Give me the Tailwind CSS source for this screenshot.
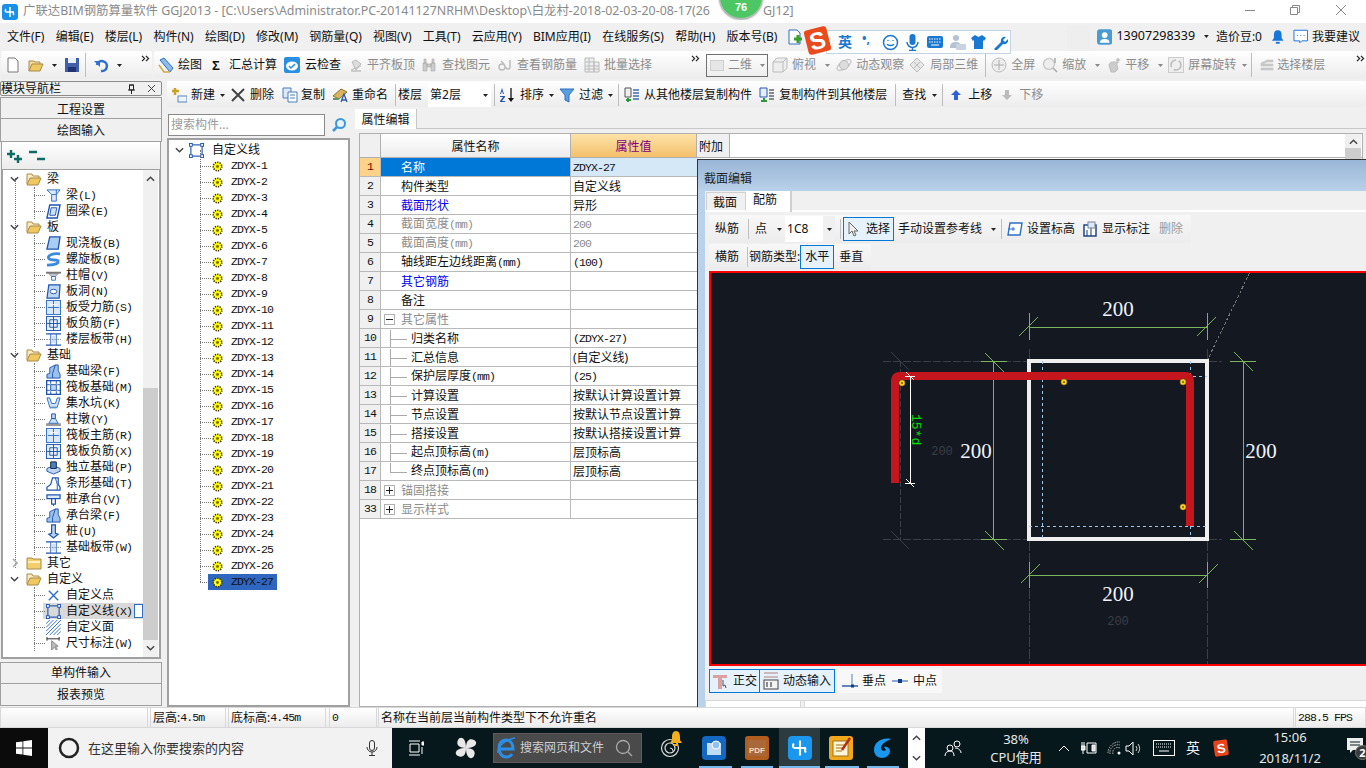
<!DOCTYPE html>
<html lang="zh-CN">
<head>
<meta charset="utf-8">
<title>广联达BIM钢筋算量软件</title>
<script src="https://cdn.jsdelivr.net/npm/@tailwindcss/browser@4"></script>
</head>
<body class="m-0 overflow-hidden bg-[#f0f0f0] [&_i]:not-italic [&_i]:text-[11.5px] [&_i]:tracking-[-0.9px] [&_i]:font-['Liberation_Mono',monospace]">
<svg class="absolute w-0 h-0" aria-hidden="true">
  <symbol id="gear" viewBox="0 0 12 12"><circle cx="6" cy="6" r="4.6" fill="#ffff00" stroke="#3a3000" stroke-width="1.8" stroke-dasharray="1.4 1.2"/><circle cx="6" cy="6" r="3.4" fill="#ffff00"/><circle cx="6" cy="6" r="1.6" fill="#7a6a10"/></symbol>
  <symbol id="fo" viewBox="0 0 16 14"><path d="M1 12V2h5l1 2h6v2" fill="#fbeec0" stroke="#a88a4a"/><path d="M1 13l3-7h11l-3 7z" fill="#f0c860" stroke="#a88a4a"/></symbol>
  <symbol id="fc" viewBox="0 0 16 14"><path d="M1 13V2h5l1 1h8v10z" fill="#f3cf6c" stroke="#a88a4a"/><path d="M2 5h12v2H2z" fill="#fdf0c0"/></symbol>
  <symbol id="chd" viewBox="0 0 10 6"><path d="M1 1l4 4 4-4" fill="none" stroke="#444" stroke-width="1.6"/></symbol>
  <symbol id="chr" viewBox="0 0 6 10"><path d="M1 1l4 4-4 4" fill="none" stroke="#aaa" stroke-width="1.6"/></symbol>
  <symbol id="beam" viewBox="0 0 16 16"><path d="M1 2h14l-4 5v7H6V7z" fill="#dcebfa" stroke="#2d6fc4"/><path d="M11 2v5M6 7h5" stroke="#2d6fc4"/></symbol>
  <symbol id="ring" viewBox="0 0 16 16"><path d="M4 1h11l-3 14H1z" fill="#fff" stroke="#1f54b0" stroke-width="1.5"/><path d="M5.500 4h6l-1.500 8h-6z" fill="#cfe2f8" stroke="#1f54b0"/></symbol>
  <symbol id="slab" viewBox="0 0 16 16"><path d="M4 1h11l-2 13H1z" fill="#a9cdf2" stroke="#1f54b0" stroke-width="1.4"/></symbol>
  <symbol id="spiral" viewBox="0 0 16 16"><path d="M15 2C7 1 1 4 3 7s10 0 10 3-7 4-12 4" fill="none" stroke="#3a8ae0" stroke-width="3"/></symbol>
  <symbol id="cap" viewBox="0 0 16 16"><path d="M0 4h16v2H0z" fill="#777"/><path d="M3 6h10l-3 3H6z" fill="#ccc" stroke="#666" stroke-width=".6"/><path d="M6 9h4v4H6z" fill="#fff" stroke="#2d6fc4"/></symbol>
  <symbol id="hole" viewBox="0 0 16 16"><path d="M3 1h12l-1 14H1z" fill="#bcd6f4" stroke="#1f54b0" stroke-width="1.3"/><ellipse cx="8" cy="8" rx="3.500" ry="2.400" fill="#fff" stroke="#1f54b0"/></symbol>
  <symbol id="gridc" viewBox="0 0 16 16"><rect x=".5" y=".5" width="15" height="15" fill="#d8e8fa" stroke="#2d6fc4"/><path d="M8 1v14M2 8h12" stroke="#2d6fc4"/><path d="M4 5h8" stroke="#fff"/></symbol>
  <symbol id="grid" viewBox="0 0 16 16"><rect x=".5" y=".5" width="15" height="15" fill="#e6f0fb" stroke="#1f54b0"/><path d="M8 1v14M1 8h14M4 4h8v8H4z" fill="none" stroke="#1f54b0"/></symbol>
  <symbol id="band" viewBox="0 0 16 16"><path d="M0 2h16M0 14h16" stroke="#1f54b0" stroke-width="1.5"/><path d="M5 2v12M11 2v12" stroke="#2d6fc4"/><path d="M6 4h4v8H6z" fill="#cfe2f8"/><path d="M0 8h16" stroke="#999" stroke-dasharray="2 1"/></symbol>
  <symbol id="fb" viewBox="0 0 16 16"><path d="M1 15V11l3-1V4l6-3h3v6l2 4v4z" fill="#9cc2ec" stroke="#1f54b0"/><path d="M10 1l-3 9v5" fill="none" stroke="#1f54b0"/></symbol>
  <symbol id="raft" viewBox="0 0 16 16"><rect x=".7" y=".7" width="14.600" height="14.600" fill="#fff" stroke="#1f54b0" stroke-width="1.4"/><rect x="5" y="5" width="6" height="6" fill="#bcd6f4" stroke="#1f54b0"/><path d="M1 5h3M12 5h3M1 11h3M12 11h3M5 1v3M11 1v3M5 12v3M11 12v3" stroke="#1f54b0"/></symbol>
  <symbol id="pit" viewBox="0 0 16 16"><path d="M1 2h3l2 6h4l2-6h3l-3 10H4z" fill="#cfe2f8" stroke="#2d6fc4"/><path d="M4 13h8" stroke="#2d6fc4" stroke-dasharray="1 1"/></symbol>
  <symbol id="pier" viewBox="0 0 16 16"><path d="M0 12h16v3H0z" fill="#999"/><path d="M3 12l3-5h4l3 5z" fill="#cfe2f8" stroke="#2d6fc4"/><path d="M6 2h4v5H6z" fill="#bcd6f4" stroke="#1f54b0"/></symbol>
  <symbol id="iso" viewBox="0 0 16 16"><path d="M1 9l7-3 7 3v3l-7 3-7-3z" fill="#bcd6f4" stroke="#1f54b0"/><path d="M5 2h6v7H5z" fill="#4a7fc4" stroke="#123"/></symbol>
  <symbol id="strip" viewBox="0 0 16 16"><path d="M1 15v-3l4-3 2-7h6v7l2 3v3z" fill="#fff" stroke="#1f54b0" stroke-width="1.3"/><path d="M10 2l2 7v6" fill="none" stroke="#1f54b0"/></symbol>
  <symbol id="capb" viewBox="0 0 16 16"><path d="M1 3h14v4H1z" fill="#dcebfa" stroke="#1f54b0" stroke-width="1.300"/><path d="M6 7h4v6H6z" fill="#fff" stroke="#1f54b0" stroke-width="1.300"/><path d="M8 13v2" stroke="#1f54b0"/></symbol>
  <symbol id="pile" viewBox="0 0 16 16"><path d="M6 1h4v9l3 1-5 4-5-4 3-1z" fill="#bcd6f4" stroke="#1f54b0" stroke-width="1.300"/></symbol>
  <symbol id="xpt" viewBox="0 0 16 16"><path d="M3 3l10 10M13 3L3 13" stroke="#2d6fc4" stroke-width="1.5"/></symbol>
  <symbol id="rect" viewBox="0 0 16 16"><rect x="2" y="2" width="12" height="12" fill="none" stroke="#1f54b0" stroke-width="1.200"/><g fill="#fff" stroke="#1f54b0"><rect x=".5" y=".5" width="3" height="3"/><rect x="12.500" y=".5" width="3" height="3"/><rect x=".5" y="12.500" width="3" height="3"/><rect x="12.500" y="12.500" width="3" height="3"/></g></symbol>
  <symbol id="hatch" viewBox="0 0 16 16"><path d="M0 4l4-4M0 8l8-8M0 12L12 0M0 16L16 0M4 16L16 4M8 16l8-8M12 16l4-4" stroke="#2d6fc4"/></symbol>
  <symbol id="dim" viewBox="0 0 16 16"><path d="M1 1v4M14 1v4M1 3h13" stroke="#222"/><path d="M6 5v10l3-3 2 3 1-1-2-3h3z" fill="#bbb" stroke="#888"/></symbol>
  <symbol id="tri" viewBox="0 0 5 3"><path d="M0 0h5L2.500 3z" fill="#222"/></symbol>
  <symbol id="trig" viewBox="0 0 5 3"><path d="M0 0h5L2.500 3z" fill="#888"/></symbol>
  <symbol id="more" viewBox="0 0 10 8"><path d="M1 1l3 3-3 3M5.500 1l3 3-3 3" fill="none" stroke="#222" stroke-width="1.400"/></symbol>
  <symbol id="gbin" viewBox="0 0 16 16"><path d="M3 13l10-4M4 5l4 8 5-6-5-4z" fill="#ddd" stroke="#bbb"/><path d="M3 14h10" stroke="#ccc" stroke-width="2"/></symbol>
</svg>

<div class="relative flex flex-col w-[1366px] h-[768px] overflow-hidden text-[12px] leading-none text-[#111] font-['Noto_Sans','Noto_Sans_CJK_SC',sans-serif] whitespace-nowrap">

  <!-- title bar -->
  <div class="flex items-center h-[23px] bg-white shrink-0 relative">
    <div class="ml-[2px] w-4 h-4 rounded-[3px] bg-[#1a8fe8] flex items-center justify-center">
      <svg class="w-3 h-3" viewBox="0 0 12 12"><path d="M6 1v10M2 6h8M2 6a2 2 0 0 1 0-3M10 6a2 2 0 0 0 0 3" fill="none" stroke="#fff" stroke-width="1.500"/></svg>
    </div>
    <span class="ml-[5px] w-[696px] text-[#8a8a8a] text-[12.4px]">广联达BIM钢筋算量软件 GGJ2013 - [C:\Users\Administrator.PC-20141127NRHM\Desktop\白龙村-2018-02-03-20-08-17(26</span>
    <span class="ml-[44px] text-[#8a8a8a] text-[12.4px]">GJ12]</span>
    <svg class="absolute left-[1245px] top-[10px] w-[10px] h-px" viewBox="0 0 10 1"><path d="M0 .5h10" stroke="#888"/></svg>
    <svg class="absolute left-[1290px] top-[5px] w-[10px] h-[10px]" viewBox="0 0 10 10"><path d="M.5 2.500h7v7h-7zM2.500 2.500v-2h7v7h-2" fill="none" stroke="#888"/></svg>
    <svg class="absolute left-[1336px] top-[5px] w-[10px] h-[10px]" viewBox="0 0 10 10"><path d="M0 0l10 10M10 0L0 10" stroke="#888"/></svg>
  </div>

  <!-- menu bar -->
  <div class="flex items-center h-[27px] pl-[7px] gap-[11.2px] bg-[#f0f0f0] shrink-0">
    <span>文件(F)</span><span>编辑(E)</span><span>楼层(L)</span><span>构件(N)</span><span>绘图(D)</span><span>修改(M)</span><span>钢筋量(Q)</span><span>视图(V)</span><span>工具(T)</span><span>云应用(Y)</span><span>BIM应用(I)</span><span>在线服务(S)</span><span>帮助(H)</span><span>版本号(B)</span>
    <svg class="-ml-[2px] w-4 h-4" viewBox="0 0 16 16"><path d="M2 1h8l3 3v11H2z" fill="#fff" stroke="#2d6fc4"/><path d="M7 10h8M11 6v8" stroke="#3aa02c" stroke-width="3"/></svg>
    <div class="ml-auto mr-[6px] flex items-center">
      <div class="w-[23px] h-[24px] bg-[#eeeeee] mr-[3px]"></div>
      <div class="flex items-center w-[267px]">
        <svg class="ml-[4px] w-4 h-4" viewBox="0 0 16 16"><rect width="16" height="16" rx="3" fill="#4a9bd4"/><circle cx="8" cy="6" r="3" fill="#fff"/><path d="M3 14c0-3 2-4 5-4s5 1 5 4z" fill="#fff"/></svg>
        <span class="ml-[4px] text-[12.5px]">13907298339</span>
        <svg class="ml-[9px] w-[5px] h-[3px]"><use href="#tri"/></svg>
        <span class="ml-[7px]">造价豆:0</span>
        <svg class="ml-[10px] w-3 h-4" viewBox="0 0 12 16"><path d="M6 1c3 0 4 2 4 5v3l2 3H0l2-3V6c0-3 1-5 4-5z" fill="#1777d8"/><path d="M4 14h4" stroke="#1777d8" stroke-width="2"/></svg>
        <svg class="ml-[9px] w-4 h-4" viewBox="0 0 16 16"><path d="M1 1h14v11H9l-2 2v-2H1z" fill="#fff" stroke="#1777d8"/><path d="M4 6.500h1M7.500 6.500h1M11 6.500h1" stroke="#1777d8"/></svg>
        <span class="ml-[4px]">我要建议</span>
      </div>
    </div>
  </div>

  <!-- main toolbar -->
  <div class="flex items-center h-[30px] shrink-0 pl-px gap-[2px]">
    <div class="flex items-center h-[28px] w-[151px] pl-[4px] rounded-[2px] bg-gradient-to-b from-white to-[#ececec] [&>*]:shrink-0">
      <svg class="w-4 h-4" viewBox="0 0 16 16"><path d="M3 1h7l3 3v11H3z" fill="#fff" stroke="#777"/></svg>
      <svg class="ml-[7px] w-4 h-4" viewBox="0 0 16 16"><path d="M1 14V4h5l1 1h5v2" fill="#f6dc9a" stroke="#a88a4a"/><path d="M1 14l3-7h11l-3 7z" fill="#f0c860" stroke="#a88a4a"/></svg>
      <svg class="ml-[8px] w-[5px] h-[3px]"><use href="#tri"/></svg>
      <svg class="ml-[7px] w-4 h-4" viewBox="0 0 16 16"><path d="M1 1h14v14H1z" fill="#3f5fa8"/><path d="M4 1h8v5H4z" fill="#e8eef8"/><path d="M4 10h8v5H4z" fill="#1e3470"/></svg>
      <span class="ml-[5px] w-px h-[24px] bg-[#bdbdbd]"></span>
      <svg class="ml-[7px] w-4 h-4" viewBox="0 0 16 16"><path d="M4 8a5 5 0 1 1 4 6" fill="none" stroke="#2f6fd0" stroke-width="2.500"/><path d="M1 4h6v6z" fill="#2f6fd0"/></svg>
      <svg class="ml-[8px] w-[5px] h-[3px]"><use href="#tri"/></svg>
      <svg class="ml-[19px] w-[9px] h-[7px] self-start mt-[4px]"><use href="#more"/></svg>
    </div>
    <div class="flex items-center h-[28px] flex-1 pl-[4px] rounded-[2px] bg-gradient-to-b from-white to-[#ececec] [&>*]:shrink-0">
      <svg class="w-4 h-4" viewBox="0 0 16 16"><path d="M2 3l4-2 9 10-3 4z" fill="#8fbbe8" stroke="#2d6fc4"/><path d="M1 8l5 7h6" fill="none" stroke="#d4a83c" stroke-width="1.500"/></svg>
      <span class="ml-[4px]">绘图</span>
      <span class="ml-[9px] w-[10px] font-bold text-[13px] text-center font-['Liberation_Sans',sans-serif]">Σ</span>
      <span class="ml-[8px]">汇总计算</span>
      <svg class="ml-[7px] w-4 h-4" viewBox="0 0 16 16"><rect width="16" height="16" rx="2" fill="#2a8fe0"/><ellipse cx="8" cy="9" rx="6" ry="4.500" fill="#fff"/><path d="M5 9l2 2 4-4" fill="none" stroke="#2a8fe0" stroke-width="1.500"/></svg>
      <span class="ml-[5px]">云检查</span>
      <svg class="ml-[7px] w-4 h-4"><use href="#gbin"/></svg>
      <span class="ml-[3px] text-[#8c8c8c]">平齐板顶</span>
      <svg class="ml-[6px] w-4 h-4" viewBox="0 0 16 16"><path d="M2 6h4v8H2zM10 6h4v8h-4zM3 2h2v4H3zM11 2h2v4h-2zM6 7h4v3H6z" fill="#ccc" stroke="#aaa" stroke-width=".6"/></svg>
      <span class="ml-[5px] text-[#8c8c8c]">查找图元</span>
      <svg class="ml-[8px] w-4 h-4" viewBox="0 0 16 16"><circle cx="4" cy="10" r="3" fill="none" stroke="#bbb" stroke-width="1.500"/><path d="M12 3v7a2 2 0 0 1-4 0M3 4l3 3" fill="none" stroke="#bbb" stroke-width="1.500"/></svg>
      <span class="ml-[3px] text-[#8c8c8c]">查看钢筋量</span>
      <svg class="ml-[7px] w-4 h-4" viewBox="0 0 16 16"><path d="M1 1h9v14H1zM10 5h5v10h-5zM1 5h9M1 9h14M1 12h14M5 1v14" fill="#eee" stroke="#bbb"/></svg>
      <span class="ml-[4px] text-[#8c8c8c]">批量选择</span>
      <svg class="ml-[39px] w-[9px] h-[7px] self-start mt-[4px]"><use href="#more"/></svg>
      <div class="ml-[6px] w-[62px] h-[23px] border border-[#707070] flex items-center pl-[2px]">
        <span class="w-[14px] h-[11px] bg-[#e6e6e6] border border-[#cfcfcf] ml-[1px]"></span>
        <span class="ml-[4px] text-[#8c8c8c]">二维</span>
        <svg class="ml-[8px] w-[5px] h-[3px]"><use href="#trig"/></svg>
      </div>
      <svg class="ml-[4px] w-4 h-4" viewBox="0 0 16 16"><path d="M1 5l4-4h10v10l-4 4H1zM1 5h10v10M11 5l4-4" fill="#eee" stroke="#bbb"/></svg>
      <span class="ml-[4px] text-[#8c8c8c]">俯视</span>
      <svg class="ml-[9px] w-[5px] h-[3px]"><use href="#trig"/></svg>
      <svg class="ml-[6px] w-4 h-4" viewBox="0 0 16 16"><ellipse cx="8" cy="8" rx="8" ry="3.500" transform="rotate(-35 8 8)" fill="none" stroke="#ccc" stroke-width="1.500"/><circle cx="8" cy="8" r="4.500" fill="#ddd" stroke="#bbb"/></svg>
      <span class="ml-[4px] text-[#8c8c8c]">动态观察</span>
      <svg class="ml-[5px] w-4 h-4" viewBox="0 0 16 16"><path d="M8 1l7 7-7 7-7-7zM4.500 4.500l7 7M11.500 4.500l-7 7" fill="#e8e8e8" stroke="#bbb"/></svg>
      <span class="ml-[5px] text-[#8c8c8c]">局部三维</span>
      <span class="ml-[7px] w-px h-[24px] bg-[#bdbdbd]"></span>
      <svg class="ml-[5px] w-4 h-4" viewBox="0 0 16 16"><circle cx="8" cy="8" r="7" fill="#eee" stroke="#bbb"/><path d="M8 3v10M3 8h10" stroke="#aaa"/></svg>
      <span class="ml-[4px] text-[#8c8c8c]">全屏</span>
      <svg class="ml-[7px] w-4 h-4" viewBox="0 0 16 16"><circle cx="7" cy="7" r="5.500" fill="#eee" stroke="#ccc" stroke-width="1.500"/><path d="M11 11l4 4M13 1v5" stroke="#aaa" stroke-width="1.500"/></svg>
      <span class="ml-[4px] text-[#8c8c8c]">缩放</span>
      <svg class="ml-[9px] w-[5px] h-[3px]"><use href="#trig"/></svg>
      <svg class="ml-[6px] w-4 h-4" viewBox="0 0 16 16"><path d="M3 8a4 4 0 0 1 4-3h4v4l1 3-3 3H5z" fill="#ccc" stroke="#bbb"/><path d="M12 1v5M10 3h4" stroke="#aaa"/></svg>
      <span class="ml-[3px] text-[#8c8c8c]">平移</span>
      <svg class="ml-[9px] w-[5px] h-[3px]"><use href="#trig"/></svg>
      <svg class="ml-[5px] w-4 h-4" viewBox="0 0 16 16"><rect x=".5" y=".5" width="15" height="15" fill="#eee" stroke="#ccc"/><circle cx="8" cy="8" r="5" fill="none" stroke="#bbb" stroke-width="1.500" stroke-dasharray="10 3"/></svg>
      <span class="ml-[4px] text-[#8c8c8c]">屏幕旋转</span>
      <svg class="ml-[6px] w-[5px] h-[3px]"><use href="#trig"/></svg>
      <span class="ml-[4px] w-px h-[24px] bg-[#bdbdbd]"></span>
      <svg class="ml-[7px] w-4 h-4" viewBox="0 0 16 16"><path d="M2 6l6-3h6v2H8L4 7h10v2H2zM2 11h12v2H2z" fill="#ccc" stroke="#bbb" stroke-width=".5"/></svg>
      <span class="ml-[2px] text-[#8c8c8c]">选择楼层</span>
      <svg class="ml-[31px] w-[9px] h-[7px] self-start mt-[4px]"><use href="#more"/></svg>
    </div>
  </div>

  <!-- body -->
  <div class="flex flex-1 min-h-0 bg-[#f0f0f0]">
    <!-- left nav -->
    <div class="flex flex-col w-[162px] h-full pt-px shrink-0 text-center">
      <div class="flex items-center h-[15px] border border-[#8c8c8c] bg-[#f0f0f0] rounded-[2px] text-left">
        <span>模块导航栏</span>
        <svg class="ml-auto w-[9px] h-[10px]" viewBox="0 0 9 10"><path d="M2.500 1v5h4V1zM1 6h7M4.500 6v4M2 1h5" fill="none" stroke="#222"/></svg>
        <svg class="ml-[11px] mr-[5px] w-[9px] h-[9px]" viewBox="0 0 9 9"><path d="M1 1l7 7M8 1L1 8" stroke="#444"/></svg>
      </div>
      <div class="mt-px h-[22px] leading-[23px] border border-[#a0a0a0] bg-[#f0f0f0]">工程设置</div>
      <div class="h-[23px] leading-[24px] border border-t-0 border-[#a0a0a0] bg-[#f0f0f0]">绘图输入</div>
      <div class="flex items-center h-[27px] mx-px pl-[4px] bg-gradient-to-b from-white to-[#ececec] border-x border-[#a0a0a0]">
        <svg class="w-[17px] h-[16px]" viewBox="0 0 17 16"><path d="M5 2v8M1 6h8M12 7v8M8 11h8" stroke="#0d6c66" stroke-width="2.400"/></svg>
        <svg class="ml-[6px] w-[17px] h-[16px]" viewBox="0 0 17 16"><path d="M0 4h8M8 11h8" stroke="#0d6c66" stroke-width="2.400"/></svg>
      </div>
      <div class="relative flex h-[490px] mx-px bg-white border-2 border-t border-[#a0a0a0] text-left">
        <span class="absolute left-[12px] top-[8px] h-[390px] border-l border-dotted border-[#777]"></span>
        <span class="absolute left-[31px] top-[17px] h-[32px] border-l border-dotted border-[#777]"></span>
        <span class="absolute left-[31px] top-[65px] h-[112px] border-l border-dotted border-[#777]"></span>
        <span class="absolute left-[31px] top-[193px] h-[192px] border-l border-dotted border-[#777]"></span>
        <span class="absolute left-[31px] top-[417px] h-[64px] border-l border-dotted border-[#777]"></span>
        <div class="relative flex-1 min-w-0 pt-px [&>div]:h-4 [&>div]:flex [&>div]:items-center [&_.c]:ml-[31px] [&_.c]:w-[11px] [&_.c]:border-t [&_.c]:border-dotted [&_.c]:border-[#777] [&_svg]:shrink-0">
          <div><svg class="ml-[7px] w-[9px] h-[6px]"><use href="#chd"/></svg><span class="ml-[7px] w-[16px]"><svg class="w-4 h-[14px]"><use href="#fo"/></svg></span><span class="ml-[5px]">梁</span></div>
          <div><span class="c"></span><svg class="ml-px w-[15px] h-[15px]"><use href="#beam"/></svg><span class="ml-[5px]">梁<i>(L)</i></span></div>
          <div><span class="c"></span><svg class="ml-px w-[15px] h-[15px]"><use href="#ring"/></svg><span class="ml-[5px]">圈梁<i>(E)</i></span></div>
          <div><svg class="ml-[7px] w-[9px] h-[6px]"><use href="#chd"/></svg><span class="ml-[7px] w-[16px]"><svg class="w-4 h-[14px]"><use href="#fo"/></svg></span><span class="ml-[5px]">板</span></div>
          <div><span class="c"></span><svg class="ml-px w-[15px] h-[15px]"><use href="#slab"/></svg><span class="ml-[5px]">现浇板<i>(B)</i></span></div>
          <div><span class="c"></span><svg class="ml-px w-[15px] h-[15px]"><use href="#spiral"/></svg><span class="ml-[5px]">螺旋板<i>(B)</i></span></div>
          <div><span class="c"></span><svg class="ml-px w-[15px] h-[15px]"><use href="#cap"/></svg><span class="ml-[5px]">柱帽<i>(V)</i></span></div>
          <div><span class="c"></span><svg class="ml-px w-[15px] h-[15px]"><use href="#hole"/></svg><span class="ml-[5px]">板洞<i>(N)</i></span></div>
          <div><span class="c"></span><svg class="ml-px w-[15px] h-[15px]"><use href="#gridc"/></svg><span class="ml-[5px]">板受力筋<i>(S)</i></span></div>
          <div><span class="c"></span><svg class="ml-px w-[15px] h-[15px]"><use href="#grid"/></svg><span class="ml-[5px]">板负筋<i>(F)</i></span></div>
          <div><span class="c"></span><svg class="ml-px w-[15px] h-[15px]"><use href="#band"/></svg><span class="ml-[5px]">楼层板带<i>(H)</i></span></div>
          <div><svg class="ml-[7px] w-[9px] h-[6px]"><use href="#chd"/></svg><span class="ml-[7px] w-[16px]"><svg class="w-4 h-[14px]"><use href="#fo"/></svg></span><span class="ml-[5px]">基础</span></div>
          <div><span class="c"></span><svg class="ml-px w-[15px] h-[15px]"><use href="#fb"/></svg><span class="ml-[5px]">基础梁<i>(F)</i></span></div>
          <div><span class="c"></span><svg class="ml-px w-[15px] h-[15px]"><use href="#raft"/></svg><span class="ml-[5px]">筏板基础<i>(M)</i></span></div>
          <div><span class="c"></span><svg class="ml-px w-[15px] h-[15px]"><use href="#pit"/></svg><span class="ml-[5px]">集水坑<i>(K)</i></span></div>
          <div><span class="c"></span><svg class="ml-px w-[15px] h-[15px]"><use href="#pier"/></svg><span class="ml-[5px]">柱墩<i>(Y)</i></span></div>
          <div><span class="c"></span><svg class="ml-px w-[15px] h-[15px]"><use href="#gridc"/></svg><span class="ml-[5px]">筏板主筋<i>(R)</i></span></div>
          <div><span class="c"></span><svg class="ml-px w-[15px] h-[15px]"><use href="#grid"/></svg><span class="ml-[5px]">筏板负筋<i>(X)</i></span></div>
          <div><span class="c"></span><svg class="ml-px w-[15px] h-[15px]"><use href="#iso"/></svg><span class="ml-[5px]">独立基础<i>(P)</i></span></div>
          <div><span class="c"></span><svg class="ml-px w-[15px] h-[15px]"><use href="#strip"/></svg><span class="ml-[5px]">条形基础<i>(T)</i></span></div>
          <div><span class="c"></span><svg class="ml-px w-[15px] h-[15px]"><use href="#capb"/></svg><span class="ml-[5px]">桩承台<i>(V)</i></span></div>
          <div><span class="c"></span><svg class="ml-px w-[15px] h-[15px]"><use href="#fb"/></svg><span class="ml-[5px]">承台梁<i>(F)</i></span></div>
          <div><span class="c"></span><svg class="ml-px w-[15px] h-[15px]"><use href="#pile"/></svg><span class="ml-[5px]">桩<i>(U)</i></span></div>
          <div><span class="c"></span><svg class="ml-px w-[15px] h-[15px]"><use href="#band"/></svg><span class="ml-[5px]">基础板带<i>(W)</i></span></div>
          <div><svg class="ml-[9px] w-[6px] h-[10px]"><use href="#chr"/></svg><span class="ml-[8px] w-[16px]"><svg class="w-4 h-[14px]"><use href="#fc"/></svg></span><span class="ml-[5px]">其它</span></div>
          <div><svg class="ml-[7px] w-[9px] h-[6px]"><use href="#chd"/></svg><span class="ml-[7px] w-[16px]"><svg class="w-4 h-[14px]"><use href="#fo"/></svg></span><span class="ml-[5px]">自定义</span></div>
          <div><span class="c"></span><svg class="ml-px w-[15px] h-[15px]"><use href="#xpt"/></svg><span class="ml-[5px]">自定义点</span></div>
          <div class="relative"><span class="absolute left-[40px] right-0 inset-y-0 bg-[#d9d9d9]"></span><span class="c relative"></span><svg class="relative ml-px w-[15px] h-[15px]"><use href="#rect"/></svg><span class="relative ml-[5px]">自定义线<i>(X)</i></span><span class="relative ml-[2px] w-[9px] h-[14px] bg-white border border-[#2d6fc4]"></span></div>
          <div><span class="c"></span><svg class="ml-px w-[15px] h-[15px]"><use href="#hatch"/></svg><span class="ml-[5px]">自定义面</span></div>
          <div><span class="c"></span><svg class="ml-px w-[15px] h-[15px]"><use href="#dim"/></svg><span class="ml-[5px]">尺寸标注<i>(W)</i></span></div>
        </div>
        <div class="flex flex-col w-[15px] mr-px h-full bg-[#f0f0f0]">
          <div class="h-[218px] pt-[6px] flex justify-center"><svg class="w-[9px] h-[6px] rotate-180"><use href="#chd"/></svg></div>
          <div class="h-[252px] bg-[#cdcdcd]"></div>
          <div class="flex-1 flex justify-center pt-[5px]"><svg class="w-[9px] h-[6px]"><use href="#chd"/></svg></div>
        </div>
      </div>
      <div class="mt-[3px] h-[22px] leading-[20px] border border-[#a0a0a0]">单构件输入</div>
      <div class="h-[22px] leading-[21px] border border-t-0 border-[#a0a0a0]">报表预览</div>
    </div>

    <!-- right work area -->
    <div class="flex flex-col flex-1 min-w-0 ml-[5px] pt-px">
      <div class="flex items-center h-[26px] pl-[4px] pt-[2px] shrink-0 rounded-[2px] bg-gradient-to-b from-white to-[#ececec] [&>*]:shrink-0">
        <svg class="w-4 h-4" viewBox="0 0 16 16"><path d="M4 1v7M1 4h7" stroke="#c9a227" stroke-width="2.500"/><rect x="7" y="9" width="9" height="6" fill="#eef4fb" stroke="#5a85b8"/></svg>
        <span class="ml-[4px]">新建</span><svg class="ml-[5px] w-[5px] h-[3px]"><use href="#tri"/></svg>
        <svg class="ml-[5px] w-4 h-4" viewBox="0 0 16 16"><path d="M2 2l12 12M14 2L2 14" stroke="#444" stroke-width="2"/></svg>
        <span class="ml-[4px]">删除</span>
        <svg class="ml-[8px] w-4 h-4" viewBox="0 0 16 16"><path d="M1 1h8v10H1z" fill="#dce9f8" stroke="#4a7fb8"/><path d="M6 5h9v10H6z" fill="#fff" stroke="#4a7fb8"/><path d="M8 8h5M8 11h5" stroke="#4a7fb8"/></svg>
        <span class="ml-[3px]">复制</span>
        <svg class="ml-[7px] w-4 h-4" viewBox="0 0 16 16"><path d="M1 9l8-7 6 3-8 7z" fill="#d9b45c" stroke="#8c7030"/><path d="M9 15l3-8 3 8M10 13h4" fill="none" stroke="#2b56b0" stroke-width="1.300"/><path d="M1 12h6" stroke="#5a9a6a" stroke-width="2"/></svg>
        <span class="ml-[4px]">重命名</span>
        <span class="ml-[7px] w-px h-[22px] bg-[#bdbdbd]"></span>
        <span class="ml-[2px]">楼层</span>
        <div class="ml-[6px] w-[63px] h-[24px] bg-white flex items-center pl-[2px]"><span>第2层</span><svg class="ml-auto mr-[3px] w-[5px] h-[3px]"><use href="#tri"/></svg></div>
        <span class="ml-[3px] w-px h-[22px] bg-[#bdbdbd]"></span>
        <svg class="ml-[4px] w-4 h-4" viewBox="0 0 16 16"><path d="M3 1L1 7h1l1-3 1 3h1zM1 9h5v1l-3 4h3v1H1v-1l3-4H1z" fill="#2b56b0"/><path d="M12 1v12" stroke="#111" stroke-width="1.300"/><path d="M9 11l3 4 3-4z" fill="#111"/></svg>
        <span class="ml-[5px]">排序</span><svg class="ml-[5px] w-[5px] h-[3px]"><use href="#tri"/></svg>
        <svg class="ml-[5px] w-4 h-4" viewBox="0 0 16 16"><path d="M1 2h14l-5 6v7l-4-2V8z" fill="#5aa0e0" stroke="#2d6fc4"/></svg>
        <span class="ml-[4px]">过滤</span><svg class="ml-[5px] w-[5px] h-[3px]"><use href="#tri"/></svg>
        <span class="ml-[5px] w-px h-[22px] bg-[#bdbdbd]"></span>
        <svg class="ml-[5px] w-4 h-4" viewBox="0 0 16 16"><path d="M1 1h6v9H1z" fill="#eee" stroke="#555"/><path d="M9 3h6M9 6h6M9 9h6M9 12h6" stroke="#3a6fb8" stroke-width="1.500"/><path d="M2 13h5M4 11v4" stroke="#2a9a3a" stroke-width="2"/></svg>
        <span class="ml-[4px]">从其他楼层复制构件</span>
        <svg class="ml-[7px] w-4 h-4" viewBox="0 0 16 16"><path d="M1 1h7v9H1z" fill="#e5effa" stroke="#2b56b0"/><path d="M10 3h5M10 6h5M10 9h5M10 12h5" stroke="#666" stroke-width="1.500"/><path d="M2 14h6M5 11v4" stroke="#2a9a3a" stroke-width="2"/></svg>
        <span class="ml-[4px]">复制构件到其他楼层</span>
        <span class="ml-[8px] w-px h-[22px] bg-[#bdbdbd]"></span>
        <span class="ml-[6px]">查找</span><svg class="ml-[6px] w-[5px] h-[3px]"><use href="#tri"/></svg>
        <span class="ml-[5px] w-px h-[22px] bg-[#bdbdbd]"></span>
        <svg class="ml-[7px] w-3 h-3" viewBox="0 0 12 12"><path d="M6 1l5 5H8v5H4V6H1z" fill="#2f5fd0"/></svg>
        <span class="ml-[6px]">上移</span>
        <svg class="ml-[9px] w-3 h-3" viewBox="0 0 12 12"><path d="M6 11l5-5H8V1H4v5H1z" fill="#bbb"/></svg>
        <span class="ml-[6px] text-[#8c8c8c]">下移</span>
      </div>

      <div class="flex flex-1 min-h-0">
        <!-- component list -->
        <div class="flex flex-col w-[183px] shrink-0">
          <div class="flex items-center h-[31px] pt-[4px] pl-px">
            <div class="flex items-center w-[157px] h-[22px] pl-[2px] bg-white border border-[#8a8a8a] text-[#9a9a9a]">搜索构件...</div>
            <svg class="ml-[6px] w-4 h-4" viewBox="0 0 16 16"><circle cx="9.500" cy="6.500" r="4.500" fill="#e8f3fc" stroke="#3b97dc" stroke-width="2"/><path d="M6 10l-4 4" stroke="#3b97dc" stroke-width="2.500"/></svg>
          </div>
          <div class="relative flex-1 bg-white border-2 border-[#a0a0a0] pt-[2px]">
            <span class="absolute left-[31px] top-[10px] h-[432px] border-l border-dotted border-[#777]"></span>
            <div class="[&>div]:h-4 [&>div]:flex [&>div]:items-center [&_.c]:ml-[31px] [&_.c]:w-[11px] [&_.c]:border-t [&_.c]:border-dotted [&_.c]:border-[#777] [&_svg.g]:w-[11px] [&_svg.g]:h-[11px] [&_svg.g]:ml-[1px] [&_.l]:ml-[8px]">
              <div><svg class="ml-[6px] w-[9px] h-[6px]"><use href="#chd"/></svg><svg class="ml-[5px] w-[15px] h-[15px]"><use href="#rect"/></svg><span class="ml-[8px]">自定义线</span></div>
              <div><span class="c"></span><svg class="g"><use href="#gear"/></svg><i class="l">ZDYX-1</i></div>
              <div><span class="c"></span><svg class="g"><use href="#gear"/></svg><i class="l">ZDYX-2</i></div>
              <div><span class="c"></span><svg class="g"><use href="#gear"/></svg><i class="l">ZDYX-3</i></div>
              <div><span class="c"></span><svg class="g"><use href="#gear"/></svg><i class="l">ZDYX-4</i></div>
              <div><span class="c"></span><svg class="g"><use href="#gear"/></svg><i class="l">ZDYX-5</i></div>
              <div><span class="c"></span><svg class="g"><use href="#gear"/></svg><i class="l">ZDYX-6</i></div>
              <div><span class="c"></span><svg class="g"><use href="#gear"/></svg><i class="l">ZDYX-7</i></div>
              <div><span class="c"></span><svg class="g"><use href="#gear"/></svg><i class="l">ZDYX-8</i></div>
              <div><span class="c"></span><svg class="g"><use href="#gear"/></svg><i class="l">ZDYX-9</i></div>
              <div><span class="c"></span><svg class="g"><use href="#gear"/></svg><i class="l">ZDYX-10</i></div>
              <div><span class="c"></span><svg class="g"><use href="#gear"/></svg><i class="l">ZDYX-11</i></div>
              <div><span class="c"></span><svg class="g"><use href="#gear"/></svg><i class="l">ZDYX-12</i></div>
              <div><span class="c"></span><svg class="g"><use href="#gear"/></svg><i class="l">ZDYX-13</i></div>
              <div><span class="c"></span><svg class="g"><use href="#gear"/></svg><i class="l">ZDYX-14</i></div>
              <div><span class="c"></span><svg class="g"><use href="#gear"/></svg><i class="l">ZDYX-15</i></div>
              <div><span class="c"></span><svg class="g"><use href="#gear"/></svg><i class="l">ZDYX-16</i></div>
              <div><span class="c"></span><svg class="g"><use href="#gear"/></svg><i class="l">ZDYX-17</i></div>
              <div><span class="c"></span><svg class="g"><use href="#gear"/></svg><i class="l">ZDYX-18</i></div>
              <div><span class="c"></span><svg class="g"><use href="#gear"/></svg><i class="l">ZDYX-19</i></div>
              <div><span class="c"></span><svg class="g"><use href="#gear"/></svg><i class="l">ZDYX-20</i></div>
              <div><span class="c"></span><svg class="g"><use href="#gear"/></svg><i class="l">ZDYX-21</i></div>
              <div><span class="c"></span><svg class="g"><use href="#gear"/></svg><i class="l">ZDYX-22</i></div>
              <div><span class="c"></span><svg class="g"><use href="#gear"/></svg><i class="l">ZDYX-23</i></div>
              <div><span class="c"></span><svg class="g"><use href="#gear"/></svg><i class="l">ZDYX-24</i></div>
              <div><span class="c"></span><svg class="g"><use href="#gear"/></svg><i class="l">ZDYX-25</i></div>
              <div><span class="c"></span><svg class="g"><use href="#gear"/></svg><i class="l">ZDYX-26</i></div>
              <div><span class="c"></span><span class="flex items-center h-4 w-[69px] -ml-[3px] pl-[3px] bg-[#2f66c0]"><svg class="g"><use href="#gear"/></svg><i class="l text-[#111]">ZDYX-27</i></span></div>
            </div>
          </div>
        </div>

        <!-- property panel -->
        <div class="flex flex-col flex-1 min-w-0 ml-[5px]">
          <div class="flex items-end h-[22px] border-b border-[#c8c8c8] shrink-0">
            <div class="flex items-center justify-center w-[62px] h-[20px] pt-[2px] bg-white border-r border-[#c8c8c8] -mb-px">属性编辑</div>
          </div>
          <div class="flex-1 min-h-0 mt-[4px] ml-[4px] mr-[3px] bg-white border border-[#b0b0b0] overflow-hidden">
            <div class="flex h-[24px] border-b border-[#b0b0b0] [&>div]:pt-[2px]">
              <div class="w-[21px] bg-[#f0f0f0] border-r border-[#b0b0b0]"></div>
              <div class="flex items-center justify-center w-[190px] bg-gradient-to-b from-white to-[#ececec] border-r border-[#b0b0b0]">属性名称</div>
              <div class="flex items-center justify-center w-[126px] bg-gradient-to-b from-[#fde3a8] to-[#f4c06a] text-[#800080] border-r border-[#b0b0b0]">属性值</div>
              <div class="flex items-center w-[33px] pl-[2px] bg-[#f0f0f0] border-r border-[#b0b0b0]">附加</div>
            </div>
            <div class="[&>div]:flex [&>div]:h-[19px] [&>div]:border-b [&>div]:border-[#b9b9b9] [&>div]:w-[337px] [&_.n]:w-[21px] [&_.n]:flex [&_.n]:items-center [&_.n]:justify-center [&_.n]:bg-[#f0f0f0] [&_.n]:border-r [&_.n]:border-[#b9b9b9] [&_.k]:w-[190px] [&_.k]:flex [&_.k]:items-center [&_.k]:pt-px [&_.k]:border-r [&_.k]:border-[#b9b9b9] [&_.v]:flex-1 [&_.v]:flex [&_.v]:items-center [&_.v]:pt-px [&_.v]:pl-[2px] [&_.p]:ml-[20px] [&_.q]:ml-[30px]">
              <div><span class="n bg-[#fdd38a]!"><i class="text-[#800000]">1</i></span><span class="k bg-[#0078d7] text-white"><span class="p">名称</span></span><span class="v bg-[#d5e8f8]"><i>ZDYX-27</i></span></div>
              <div><span class="n"><i>2</i></span><span class="k"><span class="p">构件类型</span></span><span class="v">自定义线</span></div>
              <div><span class="n"><i>3</i></span><span class="k"><span class="p text-[#0000ee]">截面形状</span></span><span class="v">异形</span></div>
              <div><span class="n"><i>4</i></span><span class="k"><span class="p text-[#8c8c8c]">截面宽度<i>(mm)</i></span></span><span class="v text-[#8c8c8c]"><i>200</i></span></div>
              <div><span class="n"><i>5</i></span><span class="k"><span class="p text-[#8c8c8c]">截面高度<i>(mm)</i></span></span><span class="v text-[#8c8c8c]"><i>200</i></span></div>
              <div><span class="n"><i>6</i></span><span class="k"><span class="p">轴线距左边线距离<i>(mm)</i></span></span><span class="v"><i>(100)</i></span></div>
              <div><span class="n"><i>7</i></span><span class="k"><span class="p text-[#0000ee]">其它钢筋</span></span><span class="v"></span></div>
              <div><span class="n"><i>8</i></span><span class="k"><span class="p">备注</span></span><span class="v"></span></div>
              <div class="relative"><span class="n"><i>9</i></span><span class="k"><span class="ml-[3px] w-[11px] h-[11px] border border-[#b0b0b0] flex items-center justify-center"><span class="block w-[7px] h-px bg-[#222]"></span></span><span class="ml-[6px] text-[#8c8c8c]">其它属性</span></span><span class="v"></span></div>
              <div><span class="n"><i>10</i></span><span class="k"><span class="ml-[9px] w-[17px] h-full border-l border-[#aaa] relative"><span class="absolute left-0 right-0 top-[9px] h-px bg-[#aaa]"></span></span><span class="ml-[4px]">归类名称</span></span><span class="v"><i>(ZDYX-27)</i></span></div>
              <div><span class="n"><i>11</i></span><span class="k"><span class="ml-[9px] w-[17px] h-full border-l border-[#aaa] relative"><span class="absolute left-0 right-0 top-[9px] h-px bg-[#aaa]"></span></span><span class="ml-[4px]">汇总信息</span></span><span class="v">(自定义线)</span></div>
              <div><span class="n"><i>12</i></span><span class="k"><span class="ml-[9px] w-[17px] h-full border-l border-[#aaa] relative"><span class="absolute left-0 right-0 top-[9px] h-px bg-[#aaa]"></span></span><span class="ml-[4px]">保护层厚度<i>(mm)</i></span></span><span class="v"><i>(25)</i></span></div>
              <div><span class="n"><i>13</i></span><span class="k"><span class="ml-[9px] w-[17px] h-full border-l border-[#aaa] relative"><span class="absolute left-0 right-0 top-[9px] h-px bg-[#aaa]"></span></span><span class="ml-[4px]">计算设置</span></span><span class="v">按默认计算设置计算</span></div>
              <div><span class="n"><i>14</i></span><span class="k"><span class="ml-[9px] w-[17px] h-full border-l border-[#aaa] relative"><span class="absolute left-0 right-0 top-[9px] h-px bg-[#aaa]"></span></span><span class="ml-[4px]">节点设置</span></span><span class="v">按默认节点设置计算</span></div>
              <div><span class="n"><i>15</i></span><span class="k"><span class="ml-[9px] w-[17px] h-full border-l border-[#aaa] relative"><span class="absolute left-0 right-0 top-[9px] h-px bg-[#aaa]"></span></span><span class="ml-[4px]">搭接设置</span></span><span class="v">按默认搭接设置计算</span></div>
              <div><span class="n"><i>16</i></span><span class="k"><span class="ml-[9px] w-[17px] h-full border-l border-[#aaa] relative"><span class="absolute left-0 right-0 top-[9px] h-px bg-[#aaa]"></span></span><span class="ml-[4px]">起点顶标高<i>(m)</i></span></span><span class="v">层顶标高</span></div>
              <div><span class="n"><i>17</i></span><span class="k"><span class="ml-[9px] w-[17px] h-[10px] self-start border-l border-b border-[#aaa]"></span><span class="ml-[4px]">终点顶标高<i>(m)</i></span></span><span class="v">层顶标高</span></div>
              <div><span class="n"><i>18</i></span><span class="k"><span class="ml-[3px] w-[11px] h-[11px] border border-[#b0b0b0] relative"><span class="absolute left-px right-px top-1 h-px bg-[#222]"></span><span class="absolute top-px bottom-px left-1 w-px bg-[#222]"></span></span><span class="ml-[6px] text-[#8c8c8c]">锚固搭接</span></span><span class="v"></span></div>
              <div><span class="n"><i>33</i></span><span class="k"><span class="ml-[3px] w-[11px] h-[11px] border border-[#b0b0b0] relative"><span class="absolute left-px right-px top-1 h-px bg-[#222]"></span><span class="absolute top-px bottom-px left-1 w-px bg-[#222]"></span></span><span class="ml-[6px] text-[#8c8c8c]">显示样式</span></span><span class="v"></span></div>
            </div>
          </div>
        </div>
      </div>
    </div>
  </div>

  <!-- status bar -->
  <div class="relative z-20 flex h-[21px] shrink-0 bg-gradient-to-b from-white to-[#ececec] border-y border-[#d8d8d8] [&>div]:flex [&>div]:items-center [&>div]:pl-[2px] [&>div]:border-x [&>div]:border-[#d8d8d8]">
    <div class="w-[148px]"></div>
    <div class="ml-[2px] w-[76px]">层高:<i>4.5m</i></div>
    <div class="ml-[2px] w-[98px]">底标高:<i>4.45m</i></div>
    <div class="ml-[3px] w-[48px]"><i>0</i></div>
    <div class="ml-[1px] w-[916px]">名称在当前层当前构件类型下不允许重名</div>
    <div class="ml-[1px] flex-1"><i>288.5 FPS</i></div>
  </div>

  <!-- taskbar -->
  <div class="relative z-20 flex items-center h-[40px] shrink-0 bg-[#07181d] text-white [&>*]:shrink-0">
    <div class="flex items-center justify-center w-[48px] h-full bg-[#0b0b0b]">
      <svg class="w-4 h-4" viewBox="0 0 16 16"><path d="M0 2.300l6.500-.9v6.200H0zM7.300 1.300L16 0v7.600H7.300zM0 8.400h6.500v6.200L0 13.700zM7.300 8.400H16V16l-8.700-1.200z" fill="#fff"/></svg>
    </div>
    <div class="flex items-center w-[344px] h-full bg-[#f2f2f2] text-[#333] text-[13px]">
      <svg class="ml-[10px] w-[22px] h-[22px]" viewBox="0 0 22 22"><circle cx="11" cy="11" r="9" fill="none" stroke="#222" stroke-width="2.500"/></svg>
      <span class="ml-[8px]">在这里输入你要搜索的内容</span>
      <svg class="ml-[122px] w-3 h-4" viewBox="0 0 12 16"><rect x="3.500" y=".5" width="5" height="10" rx="2.500" fill="none" stroke="#333"/><path d="M1 7a5 5 0 0 0 10 0M6 12v3M3 15.500h6" fill="none" stroke="#333"/></svg>
    </div>
    <svg class="ml-[16px] w-4 h-4" viewBox="0 0 16 16"><path d="M1 1h11M1 15h11M2 4h9v8H2z" fill="none" stroke="#fff"/><path d="M14 2h2v3h-2zM14 7v7" stroke="#fff" fill="#fff"/></svg>
    <svg class="ml-[30px] w-6 h-6" viewBox="0 0 24 24"><path d="M12 12C4 12 2 8 4 4s8-3 8 8zM12 12c0-8 4-10 8-8s3 8-8 8zM12 12c8 0 10 4 8 8s-8 3-8-8zM12 12c0 8-4 10-8 8s-3-8 8-8z" fill="#e8e8e8"/></svg>
    <div class="ml-[15px] flex items-center w-[149px] h-[30px] bg-[#4a4a4a] border border-[#5c5c5c] text-[#d0d0d0]">
      <svg class="ml-[3px] w-[20px] h-[24px]" viewBox="0 0 20 24"><path d="M3 13h13c0-6-3-9-7-9s-7 3-7 8 3 9 7 9c3 0 5-1 6-3" fill="none" stroke="#2a8fe8" stroke-width="3"/><path d="M1 17C0 10 10 3 18 2" fill="none" stroke="#2a8fe8" stroke-width="1.500"/></svg>
      <span class="ml-[3px]">搜索网页和文件</span>
      <svg class="ml-[11px] w-[18px] h-[18px]" viewBox="0 0 18 18"><circle cx="8" cy="8" r="6.500" fill="none" stroke="#aaa" stroke-width="1.300"/><path d="M13 13l4 4" stroke="#aaa" stroke-width="1.300"/></svg>
    </div>
    <span class="relative ml-[18px] w-[20px] h-[20px]">
      <svg class="w-[20px] h-[20px]" viewBox="0 0 20 20"><circle cx="10" cy="10" r="8.500" fill="none" stroke="#ddd" stroke-width="1.200"/><circle cx="10" cy="10" r="5" fill="none" stroke="#ddd" stroke-width="1.200"/><path d="M10 10a3 3 0 0 1 3 3" fill="none" stroke="#ddd"/></svg>
      <svg class="absolute left-[9px] -top-[7px] w-[14px] h-[15px]" viewBox="0 0 14 15"><path d="M7 0c3 0 4 3 4 6v3l2 3H1l2-3V6c0-3 1-6 4-6zM5 13h4v2H5z" fill="#f2b01e"/></svg>
    </span>
    <svg class="ml-[22px] w-6 h-6" viewBox="0 0 24 24"><rect width="24" height="24" rx="4" fill="#1368c4"/><path d="M5 7h14v12H5z" fill="#bfdcf5"/><circle cx="14" cy="9" r="4" fill="#8fc2ee" stroke="#fff"/></svg>
    <svg class="ml-[19px] w-6 h-6" viewBox="0 0 24 24"><rect width="24" height="24" rx="3" fill="#b05e20"/><rect x="3" y="4" width="18" height="16" fill="#a8683a"/><text x="12" y="17" text-anchor="middle" font-family="Liberation Sans" font-size="8" font-weight="700" fill="#f4dcc0">PDF</text></svg>
    <div class="ml-[10px] flex items-center justify-center w-[41px] h-full bg-[#2c3b40]">
      <div class="w-6 h-6 rounded-[4px] bg-[#1a97ee] flex items-center justify-center"><svg class="w-[18px] h-[18px]" viewBox="0 0 12 12"><path d="M6 1v10M2 6h8M2 6a2 2 0 0 1 0-3M10 6a2 2 0 0 0 0 3" fill="none" stroke="#fff" stroke-width="1.400"/></svg></div>
    </div>
    <svg class="ml-[9px] w-6 h-6" viewBox="0 0 24 24"><rect width="24" height="24" rx="3" fill="#f2a81c"/><rect x="4" y="5" width="15" height="15" fill="#fff5d8" stroke="#a0701a"/><path d="M7 9h8M7 12h8M7 15h6" stroke="#a0701a"/><path d="M13 14L21 2" stroke="#b03010" stroke-width="2.500"/></svg>
    <svg class="ml-[18px] w-6 h-6" viewBox="0 0 24 24"><path d="M20 3C10 1 3 7 3 14c0 5 4 8 8 8s8-3 8-7c0-3-3-5-6-4l2 3c-3 2-5 0-5-2 0-3 3-6 10-9z" fill="#1a97ee"/></svg>
    <div class="ml-[13px] flex flex-col items-center justify-around w-[17px] h-full bg-white">
      <svg class="w-[9px] h-[6px] rotate-180"><use href="#chd"/></svg>
      <svg class="w-[9px] h-[6px]"><use href="#chd"/></svg>
    </div>
    <svg class="ml-[19px] w-[20px] h-[20px]" viewBox="0 0 20 20"><circle cx="13" cy="6" r="3" fill="none" stroke="#fff"/><circle cx="6" cy="10" r="3" fill="none" stroke="#fff"/><path d="M1 18c0-3 2-5 5-5s4 2 4 5M11 10c3 0 6 2 6 5" fill="none" stroke="#fff"/></svg>
    <div class="ml-[17px] w-[70px] flex flex-col items-center gap-[5px] text-[#e8e8e8] text-[13px]"><span>38%</span><span>CPU使用</span></div>
    <svg class="ml-[7px] w-[12px] h-[7px]" viewBox="0 0 12 7"><path d="M1 6l5-5 5 5" fill="none" stroke="#fff"/></svg>
    <svg class="ml-[11px] w-[16px] h-[14px]" viewBox="0 0 16 14"><path d="M6 2h9v10H6z" fill="none" stroke="#fff"/><path d="M11 4h3v6h-3zM0 5h4v4H0zM1 1v4M3 1v4M2 9v4" fill="#ddd" stroke="#fff"/></svg>
    <svg class="ml-[10px] w-[14px] h-[14px]" viewBox="0 0 14 14"><path d="M1 12a11 11 0 0 1 12-11M3 13a8 8 0 0 1 10-9M6 13a5 5 0 0 1 7-6" fill="none" stroke="#bbb" stroke-dasharray="1.500 1"/><circle cx="12" cy="12" r="1.500" fill="#fff"/></svg>
    <svg class="ml-[4px] w-[16px] h-[15px]" viewBox="0 0 16 15"><path d="M1 5h3l4-4v13l-4-4H1z" fill="none" stroke="#fff"/><path d="M11 5a4 4 0 0 1 0 5M13 3a7 7 0 0 1 0 9" fill="none" stroke="#ccc"/></svg>
    <svg class="ml-[12px] w-[22px] h-[16px]" viewBox="0 0 22 16"><rect x=".5" y=".5" width="21" height="15" fill="none" stroke="#fff"/><path d="M3 4h16M3 7h16" stroke="#fff" stroke-dasharray="1 1"/><path d="M6 11h10" stroke="#fff"/></svg>
    <span class="ml-[11px] text-[14px] text-[#eee]">英</span>
    <span class="ml-[14px] flex items-center justify-center w-[14px] h-[16px] rotate-[-8deg] bg-[#e8431c] rounded-[2px] text-white font-bold text-[13px] font-['Liberation_Sans',sans-serif]">S</span>
    <div class="ml-[27px] w-[70px] flex flex-col items-center gap-[8px] text-[#e8e8e8] text-[13px]"><span>15:06</span><span>2018/11/2</span></div>
    <span class="relative ml-[22px] w-[24px] h-[24px]">
      <svg class="absolute left-0 top-[2px] w-[16px] h-[16px]" viewBox="0 0 16 16"><path d="M0 0h16v12H6l-3 3v-3H0z" fill="#eee"/><path d="M3 4h10M3 7h10" stroke="#07181d"/></svg>
      <span class="absolute left-[8px] top-[9px] w-[15px] h-[15px] rounded-full bg-[#3a3a3a] border border-[#777] flex items-center justify-center text-[11px] font-bold">2</span>
    </span>
    <!-- running app underlines -->
    <span class="absolute bottom-0 left-[699px] w-[33px] h-[2px] bg-[#76b9ed]"></span>
    <span class="absolute bottom-0 left-[741px] w-[32px] h-[2px] bg-[#76b9ed]"></span>
    <span class="absolute bottom-0 left-[779px] w-[41px] h-[2px] bg-[#76b9ed]"></span>
    <span class="absolute bottom-0 left-[825px] w-[34px] h-[2px] bg-[#76b9ed]"></span>
    <span class="absolute bottom-0 left-[867px] w-[32px] h-[2px] bg-[#76b9ed]"></span>
  </div>

  <!-- scrollbar behind dialog -->
  <div class="absolute left-[1345px] top-[134px] w-[16px] h-[25px] bg-[#f0f0f0] flex flex-col items-center">
    <svg class="mt-[5px] w-[9px] h-[6px] rotate-180"><use href="#chd"/></svg>
    <span class="mt-[3px] w-full flex-1 bg-[#cdcdcd]"></span>
  </div>

  <!-- floating dialog -->
  <div class="absolute left-[697px] top-[159px] z-10 flex flex-col w-[669px] h-[548px] bg-[#f0f0f0] border-l border-t border-[#333]">
    <div class="flex items-center h-[31px] shrink-0 pl-[6px] pt-[7px] bg-gradient-to-b from-[#9ab6d6] to-[#b9d1ea] text-[#222]">截面编辑</div>
    <div class="flex flex-1 min-h-0">
      <div class="w-[7px] bg-[#b9d1ea]"></div>
      <div class="flex flex-col flex-1 min-w-0">
        <div class="flex items-end h-[21px] shrink-0 border-b-2 border-white">
          <div class="flex items-center justify-start pl-[6px] pt-[2px] w-[40px] h-[18px] ml-px border border-b-0 border-[#d0d0d0]"><span>截面</span></div>
          <div class="flex items-center justify-start pl-[7px] w-[46px] h-[21px] bg-white border-r-2 border-[#d0d0d0] -mb-[2px]"><span class="-mt-[4px]">配筋</span></div>
        </div>
        <div class="flex items-center h-[28px] w-[482px] ml-[4px] mt-[3px] pl-[6px] shrink-0 bg-gradient-to-b from-[#f8f8f8] to-[#ececec] [&>*]:shrink-0">
          <span>纵筋</span>
          <span class="ml-[9px] w-px h-[20px] bg-[#c0c0c0]"></span>
          <span class="ml-[6px]">点</span><svg class="ml-[10px] w-[5px] h-[3px]"><use href="#tri"/></svg>
          <div class="ml-[3px] w-[50px] h-[26px] bg-white flex items-center pl-[2px] relative"><span class="text-[12px]">1C8</span><span class="absolute right-0 inset-y-0 w-[12px] bg-[#f0f0f0] flex items-center justify-center"><svg class="w-[5px] h-[3px]"><use href="#tri"/></svg></span></div>
          <span class="ml-[5px] w-px h-[20px] bg-[#c0c0c0]"></span>
          <div class="ml-[2px] flex items-center w-[51px] h-[24px] border border-[#0078d7] bg-[#e5f1fb]">
            <svg class="ml-[4px] w-[12px] h-4" viewBox="0 0 12 16"><path d="M1 1v12l3-3 2 5 2-1-2-4h4z" fill="#eee" stroke="#666"/></svg>
            <span class="ml-[6px]">选择</span>
          </div>
          <span class="ml-[4px]">手动设置参考线</span><svg class="ml-[9px] w-[5px] h-[3px]"><use href="#tri"/></svg>
          <span class="ml-[5px] w-px h-[20px] bg-[#c0c0c0]"></span>
          <svg class="ml-[5px] w-4 h-4" viewBox="0 0 16 16"><path d="M3 2h12l-2 12H1z" fill="#fff" stroke="#2d6fc4" stroke-width="1.400"/><path d="M1 8h7M6 6v4" stroke="#2d6fc4"/></svg>
          <span class="ml-[4px]">设置标高</span>
          <svg class="ml-[8px] w-[14px] h-4" viewBox="0 0 14 16"><rect x="1" y="4" width="12" height="11" fill="#fff" stroke="#123a78" stroke-width="1.400"/><path d="M4 15V9M8 15V7" stroke="#123a78"/><rect x="5" y="1" width="7" height="6" fill="#dbe8f5" stroke="#789"/></svg>
          <span class="ml-[5px]">显示标注</span>
          <span class="ml-[9px] text-[#9a9a9a]">删除</span>
        </div>
        <div class="flex items-center h-[26px] w-[162px] ml-[4px] mt-px pl-[6px] shrink-0 bg-gradient-to-b from-[#f8f8f8] to-[#ececec] [&>*]:shrink-0">
          <span>横筋</span>
          <span class="ml-[8px] w-px h-[20px] bg-[#c0c0c0]"></span>
          <span class="ml-px">钢筋类型:</span>
          <div class="flex items-center justify-center w-[34px] h-[24px] border border-[#0078d7] bg-[#e5f1fb]">水平</div>
          <span class="ml-[5px]">垂直</span>
        </div>
        <!-- canvas -->
        <div class="relative ml-[4px] mt-px h-[395px] shrink-0 bg-[#141821] border-y-2 border-l-2 border-[#ff0000] overflow-hidden">
          <svg class="absolute -left-[2px] -top-[2px]" width="657" height="395" viewBox="709 271 657 395">
            <g stroke="#3a3f48" fill="none" shape-rendering="crispEdges">
              <path d="M883 361H1027M883 539H1027M1209 361H1222M1209 539H1222" stroke-dasharray="8 2"/>
              <path d="M900 361V539" stroke-dasharray="6 2"/>
              <path d="M1029 349V361M1207 349V361M1029 541V665M1207 541V665" stroke-dasharray="10 2"/>
              <path d="M891 352l18 18M891 531l18 18"/>
              <path d="M1207 361L1250 272" stroke="#777" stroke-dasharray="3 2"/>
            </g>
            <g stroke="#7ab55c" fill="none" shape-rendering="crispEdges">
              <path d="M1029 313V340M1207 313V340M1029 327H1207M1019 336l19-19M1197 336l19-19"/>
              <path d="M981 361H1007M981 539H1007M993 361V539M985 353l19 19M985 531l19 19"/>
              <path d="M1230 361H1256M1230 539H1256M1243 361V539M1234 352l19 19M1234 531l19 19"/>
              <path d="M1029 562V588M1207 562V588M1029 575H1207M1021 583l19-19M1199 583l19-19"/>
            </g>
            <rect x="1029" y="361" width="178" height="178" fill="none" stroke="#efefef" stroke-width="4"/>
            <path d="M1042 361V539M1029 526H1207M1190 361V376H1207M1190 526V539" fill="none" stroke="#9cc8f0" stroke-dasharray="3 3" shape-rendering="crispEdges"/>
            <path d="M895 483V381Q895 376 900 376H1185Q1190 376 1190 381V526" fill="none" stroke="#c4161c" stroke-width="8"/>
            <g fill="#ffd21e" stroke="#141821" stroke-width=".5"><circle cx="902" cy="383" r="3.200"/><circle cx="1064" cy="382" r="3.200"/><circle cx="1183" cy="382" r="3.200"/><circle cx="1183" cy="507" r="3.200"/></g>
            <g fill="#6a5a10"><circle cx="902" cy="383" r="1"/><circle cx="1064" cy="382" r="1"/><circle cx="1183" cy="382" r="1"/><circle cx="1183" cy="507" r="1"/></g>
            <path d="M910 376V483M906 372l8 8M906 479l8 8M905 376h10M905 483h10" stroke="#fff" fill="none" shape-rendering="crispEdges"/>
            <text transform="translate(912 414) rotate(90)" font-family="Liberation Mono" font-size="13" fill="#00e000">15*d</text>
            <g font-family="Liberation Serif" font-size="21" fill="#eef4fb" text-anchor="middle">
              <text x="1118" y="316">200</text>
              <text x="976" y="458">200</text>
              <text x="1261" y="458">200</text>
              <text x="1118" y="601">200</text>
            </g>
            <g font-family="Liberation Mono" font-size="12" fill="#3a3f48" text-anchor="middle">
              <text x="942" y="455">200</text>
              <text x="1118" y="625">200</text>
            </g>
          </svg>
        </div>
        <div class="flex items-center h-[24px] ml-[4px] mt-[3px] shrink-0">
          <div class="flex items-center w-[51px] h-[24px] border border-[#0078d7] bg-[#e5f1fb] pl-[2px]">
            <svg class="w-[18px] h-[18px]" viewBox="0 0 18 18"><path d="M1 3h14v3H10v11H6V6H1z" fill="#dca0a0"/><path d="M11 8v6l2-1 1 3" fill="none" stroke="#555"/></svg>
            <span class="ml-[3px]">正交</span>
          </div>
          <div class="flex items-center w-[75px] h-[24px] border border-l-0 border-[#0078d7] bg-[#e5f1fb] pl-[2px]">
            <svg class="w-[18px] h-[18px]" viewBox="0 0 18 18"><path d="M2 1h14M2 5h14" stroke="#b08080"/><rect x="2" y="8" width="14" height="9" fill="#f4f4f4" stroke="#444"/><path d="M5 10v5M9 10v5" stroke="#222"/></svg>
            <span class="ml-[3px]">动态输入</span>
          </div>
          <div class="flex items-center h-[24px] w-[105px] ml-[2px] bg-[#f8f8f8] pl-[5px]">
            <svg class="w-[17px] h-4" viewBox="0 0 17 16"><path d="M10 1v13" stroke="#8aa8d0" stroke-width="1.500"/><path d="M0 13h16" stroke="#2d5fa8" stroke-width="1.500"/><rect x="9" y="11.500" width="3" height="3" fill="#123a88"/></svg>
            <span class="ml-[3px]">垂点</span>
            <svg class="ml-[6px] w-[17px] h-4" viewBox="0 0 17 16"><path d="M0 8h16" stroke="#8aa8d0" stroke-width="2"/><rect x="6" y="6" width="4" height="4" fill="#123a88"/></svg>
            <span class="ml-[4px]">中点</span>
          </div>
        </div>
        <div class="flex flex-1 min-h-0 mt-[7px] pl-0 overflow-hidden border-t border-[#d8d8d8]">
          <div class="w-[96px] bg-white border-x border-[#d8d8d8]"></div>
          <div class="ml-[3px] flex-1 bg-white border-l border-[#d8d8d8]"></div>
        </div>
      </div>
    </div>
  </div>

  <!-- sogou IME bar -->
  <div class="absolute z-30 left-[826px] top-[30px] flex items-center w-[185px] h-[24px] bg-white/90 border border-[#c4d4e6] [&>*]:shrink-0">
    <span class="ml-[11px] text-[#1a78d0] font-bold text-[14px]">英</span>
    <span class="ml-[10px] w-[10px] text-[#1a78d0] font-bold text-[12px] -mt-[6px]">•,</span>
    <svg class="ml-[10px] w-[17px] h-[17px]" viewBox="0 0 17 17"><circle cx="8.500" cy="8.500" r="7" fill="none" stroke="#1a78d0" stroke-width="1.500"/><path d="M5 10c1 2 6 2 7 0M6 6v1M11 6v1" fill="none" stroke="#1a78d0" stroke-width="1.300"/></svg>
    <svg class="ml-[7px] w-[13px] h-[17px]" viewBox="0 0 13 17"><rect x="3.500" y="0" width="6" height="11" rx="3" fill="#1a78d0"/><path d="M1 8a5.500 5.500 0 0 0 11 0M6.500 14v3M3 16.500h7" fill="none" stroke="#1a78d0" stroke-width="1.500"/></svg>
    <svg class="ml-[8px] w-[16px] h-[13px]" viewBox="0 0 16 13"><rect width="16" height="12" rx="2" fill="#1a78d0"/><path d="M2 3h12M2 6h12" stroke="#fff" stroke-dasharray="1.500 1"/><path d="M4 9h8" stroke="#fff"/></svg>
    <svg class="ml-[7px] w-[16px] h-[15px]" viewBox="0 0 16 15"><circle cx="6" cy="3" r="3" fill="#b4c2d4"/><path d="M0 12c0-4 3-5 6-5s4 1 4 2v4H0z" fill="#b4c2d4"/><rect x="6" y="9" width="10" height="6" rx="1" fill="#c8d2e0"/></svg>
    <svg class="ml-[5px] w-[15px] h-[14px]" viewBox="0 0 15 14"><path d="M4 0l3.500 2L11 0l4 3-2 3-1-1v9H3V5L2 6 0 3z" fill="#1a78d0"/></svg>
    <svg class="ml-[7px] w-[15px] h-[15px]" viewBox="0 0 15 15"><path d="M1 14l7-7a4 4 0 0 1 5-5l-3 3 2 2 3-3a4 4 0 0 1-5 5l-7 7z" fill="#1a78d0"/></svg>
  </div>
  <div class="absolute z-30 left-[806px] top-[28px] flex items-center justify-center w-[23px] h-[25px] rotate-[-14deg] rounded-[3px] bg-[#ea4a1c] text-white font-bold text-[24px] font-['Liberation_Sans',sans-serif]">S</div>

  <!-- floating score badge -->
  <div class="absolute z-30 left-[713px] top-0 w-[56px] h-[20px] overflow-hidden">
    <div class="absolute left-[6px] -top-[25px] w-[44px] h-[44px] rounded-full bg-[#4cc764] border border-[#b9c4bc] shadow-[0_1px_2px_rgba(0,0,0,.4)] flex items-end justify-center pb-[5px] text-white font-bold text-[11px] font-['Liberation_Sans',sans-serif]">76</div>
  </div>
</div>
</body>
</html>
